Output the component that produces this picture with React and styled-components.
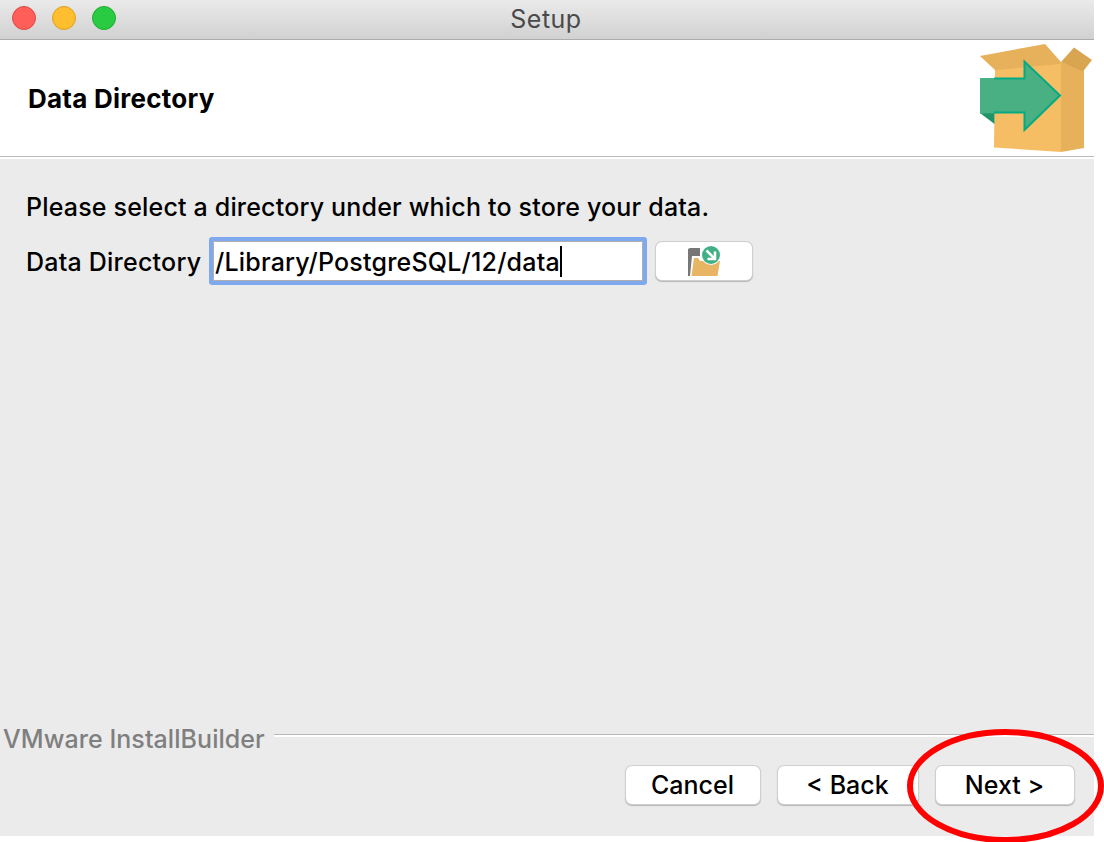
import React from "react";
import styled, { createGlobalStyle } from "styled-components";

const GlobalStyle = createGlobalStyle`
  * { box-sizing: border-box; }
  html, body { margin: 0; background: #fff; overflow: hidden; }
  body { font-family: Inter, "Liberation Sans", sans-serif; font-size: 25px; font-weight: 500; color: #000; }
`;

const Page = styled.div`
  position: relative;
  width: 1104px;
  height: 842px;
  overflow: hidden;
`;

const Window = styled.main`
  width: 1094px;
  height: 836px;
  display: flex;
  flex-direction: column;
  background: #ebebeb;
`;

const TitleBar = styled.header`
  height: 40px;
  flex: none;
  display: grid;
  grid-template-columns: 1fr auto 1fr;
  background: linear-gradient(#eaeaea, #d1d1d1);
  border-bottom: 1px solid #acacac;
`;

const Lights = styled.div`
  display: flex;
  gap: 16px;
  padding: 6px 0 0 12px;
`;

const Light = styled.span`
  width: 24px;
  height: 24px;
  border-radius: 50%;
  background: ${(p) => p.$fill};
  border: 1px solid ${(p) => p.$edge};
`;

const Text = styled.span`
  line-height: 32px;
  white-space: pre;
  letter-spacing: ${(p) => p.$track || "0"}px;
`;

const Title = styled(Text)`
  color: #4a4a4a;
  font-weight: 400;
  padding: 3px 2px 0 0;
`;

const Banner = styled.section`
  height: 119px;
  flex: none;
  display: flex;
  justify-content: space-between;
  background: #fff;
  border-bottom: 2px solid #fff;
  box-shadow: inset 0 -1px 0 #b9b9b9;
`;

const Heading = styled.h1`
  margin: 43px 0 0 28px;
  font-size: 26px;
  font-weight: 700;
  line-height: 32px;
  letter-spacing: ${(p) => p.$track}px;
`;

const Content = styled.section`
  flex: 1;
  padding: 32px 26px 0;
`;

const Row = styled.div`
  display: flex;
  align-items: flex-start;
  margin-top: 14px;
`;

const Label = styled(Text)`
  width: 183px;
  padding-top: 9px;
`;

const Field = styled.div`
  width: 438px;
  height: 48px;
  display: flex;
  align-items: center;
  padding: 1px 0 0 2px;
  background: #fff;
  border: 4px solid #7fa9ee;
  border-radius: 3px;
  box-shadow: inset 0 0 0 1px #b0aeb0;
`;

const Caret = styled.span`
  width: 2px;
  height: 31px;
  background: #000;
`;

const Button = styled.button`
  width: ${(p) => p.$width}px;
  height: 38px;
  padding: 0 1px 1px 0;
  display: flex;
  align-items: center;
  justify-content: center;
  border: 0;
  border-radius: 6px;
  background: #fff;
  color: #000;
  font: 500 25px Inter, "Liberation Sans", sans-serif;
  box-shadow: 0 0 0 1px #cfcfcf, 0 1px 1px 1px #b5b5b5;
`;

const BrowseButton = styled(Button)`
  margin: 5px 0 0 9px;
`;

const FooterLine = styled.div`
  display: flex;
  align-items: center;
  height: 32px;
  padding-left: 3px;
  color: #7f7f7f;
`;

const Brand = styled(Text)`
  width: 271px;
`;

const Rule = styled.span`
  flex: 1;
  height: 3px;
  margin-bottom: 8px;
  border-top: 1px solid #b9b9b9;
  background: #fff;
`;

const Actions = styled.footer`
  display: flex;
  justify-content: flex-end;
  gap: 18px;
  padding: 11px 20px 32px 0;
`;

const Marker = styled.svg`
  position: absolute;
  left: 904px;
  top: 726px;
  pointer-events: none;
`;

const BoxLogo = () => (
  <svg width="130" height="116" viewBox="964 40 130 116">
    <path d="M995 69 1061 62V152L994 147.500Z" fill="#f5be64" />
    <path d="M1061 62 1084 71V148L1061 152Z" fill="#e7b05a" />
    <path d="M980 56 1045 44 1061 62 1060 64 995 70Z" fill="#e7b05a" />
    <path d="M1061 62 1074 47.500 1092 60 1083 71.500Z" fill="#d9a550" />
    <path d="M980 113H994.500V124Z" fill="#209467" />
    <path d="M980 78H1024.500V61.500L1060 95.500 1024.500 130V112.500L980 113.500Z" fill="#48b083" />
    <path d="M994 78.500H1024.500V61.500L1060 95.500 1024.500 130V112.500H994" fill="none" stroke="#04aa82" strokeWidth="2" />
  </svg>
);

const FolderIcon = () => (
  <svg width="34" height="32" viewBox="687 245 34 32">
    <path d="M688 249 690 248H700V256H692L690 276H688Z" fill="#777" />
    <path d="M694 258H698L700 261H720L717.500 276H691.500Z" fill="#e7b563" />
    <circle cx="711" cy="255" r="10" fill="#fff" />
    <circle cx="711" cy="255" r="9" fill="#42b087" />
    <path d="M706.500 250.500 714.500 258.500M715 251.500V259H707.500" fill="none" stroke="#fff" strokeWidth="2.500" />
  </svg>
);

export default function App() {
  return (
    <Page>
      <GlobalStyle />
      <Window>
        <TitleBar>
          <Lights>
            <Light $fill="#ff5f58" $edge="#dd4943" />
            <Light $fill="#ffbe2e" $edge="#dda023" />
            <Light $fill="#29cb42" $edge="#1fac2f" />
          </Lights>
          <Title $track={0.5}>Setup</Title>
        </TitleBar>
        <Banner>
          <Heading $track={0.25}>Data Directory</Heading>
          <BoxLogo />
        </Banner>
        <Content>
          <Text $track={0.18}>Please select a directory under which to store your data.</Text>
          <Row>
            <Label $track={0.22}>Data Directory</Label>
            <Field>
              <Text $track={0.2}>/Library/PostgreSQL/12/data</Text>
              <Caret />
            </Field>
            <BrowseButton $width={96} aria-label="Browse"><FolderIcon /></BrowseButton>
          </Row>
        </Content>
        <FooterLine>
          <Brand $track={0.06}>VMware InstallBuilder</Brand>
          <Rule />
        </FooterLine>
        <Actions>
          <Button $width={134}><Text>Cancel</Text></Button>
          <Button $width={140}><Text>&lt; Back</Text></Button>
          <Button $width={138}><Text>Next &gt;</Text></Button>
        </Actions>
      </Window>
      <Marker width="200" height="116" viewBox="904 726 200 116">
        <ellipse cx="1005.500" cy="786" rx="95.500" ry="54" fill="none" stroke="#f00" strokeWidth="6" />
      </Marker>
    </Page>
  );
}
